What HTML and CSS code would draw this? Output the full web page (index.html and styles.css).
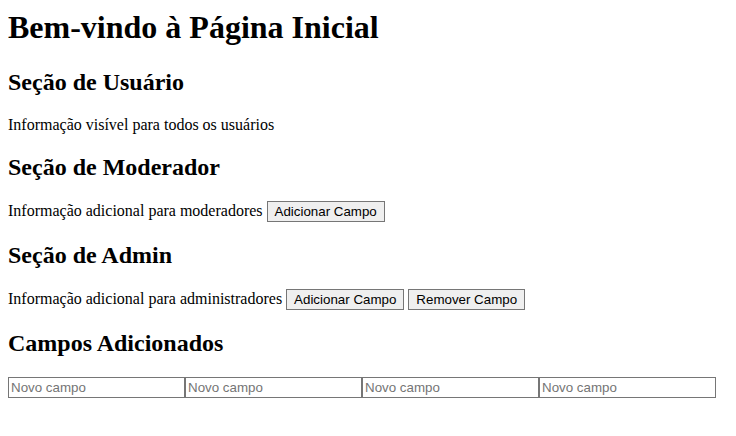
FILE: index.html
```html
<!DOCTYPE html>
<html lang="pt">
<head>
<meta charset="utf-8">
<title>Página Inicial</title>
<link rel="stylesheet" href="styles.css">
</head>
<body>
<h1 class="title">Bem-vindo à Página Inicial</h1>
<div class="section">
  <h2>Seção de Usuário</h2>
  <p>Informação visível para todos os usuários</p>
</div>
<div class="section">
  <h2>Seção de Moderador</h2>
  <p>Informação adicional para moderadores <button class="btn">Adicionar Campo</button></p>
</div>
<div class="section">
  <h2>Seção de Admin</h2>
  <p>Informação adicional para administradores <button class="btn">Adicionar Campo</button> <button class="btn">Remover Campo</button></p>
</div>
<div class="section">
  <h2>Campos Adicionados</h2>
  <div class="fields">
    <input class="field" type="text" placeholder="Novo campo">
    <input class="field" type="text" placeholder="Novo campo">
    <input class="field" type="text" placeholder="Novo campo">
    <input class="field" type="text" placeholder="Novo campo">
  </div>
</div>
</body>
</html>
```

FILE: styles.css
```css
body {
  margin: 8px;
  font-family: "Liberation Serif", "Times New Roman", serif;
  font-size: 16px;
  color: #000;
  background: #fff;
}
.title {
  font-size: 32px;
  margin: 1px 0 23px;
}
h2 {
  font-size: 24px;
  margin: 20px 0;
}
p {
  margin: 16px 0;
}
.btn {
  font-family: "Liberation Sans", Arial, sans-serif;
  font-size: 13.333px;
  color: #000;
  background: #efefef;
  border: 1px solid #767676;
  border-radius: 0;
  padding: 1px 7px;
  margin: 0;
  height: 21px;
  vertical-align: baseline;
}
.fields {
  display: grid;
  grid-template-columns: repeat(4, 177px);
}
.field {
  box-sizing: border-box;
  width: 177px;
  height: 21px;
  margin: 0;
  padding: 1px 2px;
  border: 1px solid #767676;
  border-radius: 0;
  font-family: "Liberation Sans", Arial, sans-serif;
  font-size: 13.333px;
  color: #000;
  background: #fff;
}
.field::placeholder {
  color: #757575;
}
```
